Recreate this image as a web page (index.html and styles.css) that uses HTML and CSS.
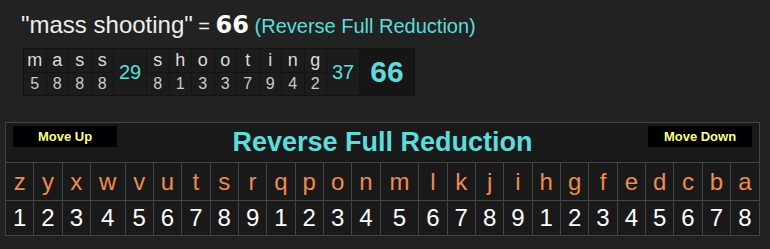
FILE: index.html
```html
<!DOCTYPE html>
<html>
<head>
<meta charset="utf-8">
<link rel="stylesheet" href="styles.css">
</head>
<body>
<div class="title"><span class="phrase">"mass shooting"</span> = <span class="total">66</span> <span class="cipher-name">(Reverse Full Reduction)</span></div>
<table class="breakdown">
  <tr>
    <td class="l">m</td><td class="l">a</td><td class="l">s</td><td class="l">s</td>
    <td class="sum" rowspan="2">29</td>
    <td class="l">s</td><td class="l">h</td><td class="l">o</td><td class="l">o</td><td class="l">t</td><td class="l">i</td><td class="l">n</td><td class="l">g</td>
    <td class="sum" rowspan="2">37</td>
    <td class="grand" rowspan="2">66</td>
  </tr>
  <tr>
    <td class="d">5</td><td class="d">8</td><td class="d">8</td><td class="d">8</td>
    <td class="d">8</td><td class="d">1</td><td class="d">3</td><td class="d">3</td><td class="d">7</td><td class="d">9</td><td class="d">4</td><td class="d">2</td>
  </tr>
</table>
<table class="chart">
  <tr class="head">
    <th colspan="26">
      <div class="head-inner">
        <button class="move">Move Up</button>
        <h2 class="chart-title">Reverse Full Reduction</h2>
        <button class="move move-down">Move Down</button>
      </div>
    </th>
  </tr>
  <tr class="letters">
    <td>z</td><td>y</td><td>x</td><td>w</td><td>v</td><td>u</td><td>t</td><td>s</td><td>r</td><td>q</td><td>p</td><td>o</td><td>n</td><td>m</td><td>l</td><td>k</td><td>j</td><td>i</td><td>h</td><td>g</td><td>f</td><td>e</td><td>d</td><td>c</td><td>b</td><td>a</td>
  </tr>
  <tr class="numbers">
    <td>1</td><td>2</td><td>3</td><td>4</td><td>5</td><td>6</td><td>7</td><td>8</td><td>9</td><td>1</td><td>2</td><td>3</td><td>4</td><td>5</td><td>6</td><td>7</td><td>8</td><td>9</td><td>1</td><td>2</td><td>3</td><td>4</td><td>5</td><td>6</td><td>7</td><td>8</td>
  </tr>
</table>
</body>
</html>
```
FILE: styles.css
```css
body {
  margin: 0;
  background: #222222;
  font-family: "Liberation Sans", Arial, sans-serif;
  color: #eeeeee;
}

.title {
  margin: 11px 0 0 21px;
  font-size: 20px;
  line-height: 28px;
  white-space: nowrap;
}

.phrase {
  font-size: 24px;
}

.total {
  font-family: "DejaVu Sans", sans-serif;
  font-weight: bold;
  font-size: 24px;
  color: #ffffff;
}

.cipher-name {
  color: #5cdcdc;
}

.breakdown {
  margin: 8px 0 0 23px;
  border-collapse: collapse;
  background: #1c1c1c;
}

.breakdown td {
  border: 1px solid #141414;
  padding: 0;
  text-align: center;
  vertical-align: middle;
}

.breakdown .l {
  width: 21.5px;
  height: 23px;
  font-size: 18px;
  color: #dddddd;
}

.breakdown .d {
  height: 22px;
  font-size: 16px;
  color: #cccccc;
}

.breakdown .sum {
  width: 32px;
  font-size: 20px;
  color: #5cdcdc;
}

.breakdown .grand {
  width: 54px;
  font-size: 30px;
  font-weight: bold;
  color: #5cdcdc;
  background: #161616;
}

.chart {
  margin: 26px 0 0 5px;
  width: 755px;
  border-collapse: collapse;
  background: #191919;
}

.chart td,
.chart th {
  border: 1px solid #444444;
  padding: 0 2px;
  text-align: center;
  vertical-align: middle;
}

.chart th {
  padding: 0;
}

.head-inner {
  display: grid;
  grid-template-columns: 1fr auto 1fr;
  align-items: start;
  height: 39px;
}

.move {
  justify-self: start;
  margin: 3px 0 0 7px;
  width: 104px;
  height: 21px;
  padding: 0;
  border: 0;
  background: #000004;
  color: #ffff88;
  font-family: "Liberation Sans", Arial, sans-serif;
  font-weight: bold;
  font-size: 13px;
  line-height: 21px;
}

.move-down {
  justify-self: end;
  margin: 3px 7px 0 0;
}

.chart-title {
  margin: 0;
  font-size: 27px;
  line-height: 39px;
  font-weight: bold;
  color: #5cdcdc;
}

.letters td {
  height: 37px;
  font-size: 24px;
  color: #f08a50;
}

.numbers td {
  height: 34px;
  font-size: 24px;
  color: #ffffff;
}
```
